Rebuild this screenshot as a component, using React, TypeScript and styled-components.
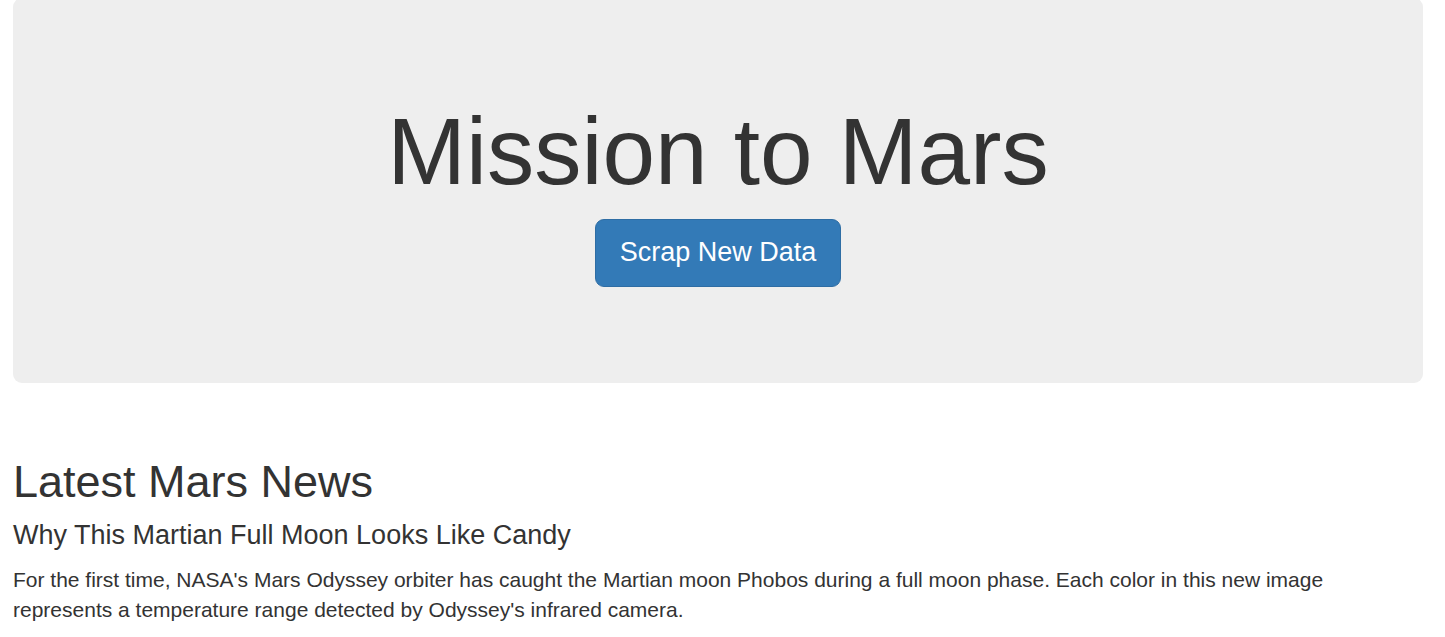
import React from "react";
import styled, { createGlobalStyle } from "styled-components";

const GlobalStyle = createGlobalStyle`
  html, body {
    margin: 0;
    padding: 0;
    background: #ffffff;
  }
  body {
    font-family: "Liberation Sans", Arial, Helvetica, sans-serif;
    font-size: 21px;
    line-height: 1.42857143;
    color: #333333;
  }
  * { box-sizing: border-box; }
`;

const Page = styled.div`
  padding: 0 22px 0 13px;
`;

const Jumbotron = styled.header`
  margin: -2px 0 45px;
  padding: 72px 90px;
  background: #eeeeee;
  border-radius: 9px;
  text-align: center;
`;

const Title = styled.h1`
  margin: 30px 0 15px;
  font-size: 94.5px;
  line-height: 1.1;
  font-weight: 500;
  color: inherit;
`;

const Lead = styled.p`
  margin: 0 0 24px;
  font-size: 31.5px;
  font-weight: 200;
  line-height: 45px;
`;

const PrimaryButton = styled.a`
  display: inline-block;
  padding: 15px 24px;
  font-size: 27px;
  line-height: 1.3333333;
  font-weight: 400;
  color: #ffffff;
  background: #337ab7;
  border: 1.5px solid #2e6da4;
  border-radius: 9px;
  text-decoration: none;
  vertical-align: middle;
  cursor: pointer;
  white-space: nowrap;
`;

const Section = styled.section`
  display: flow-root;
  padding-top: 29px;
`;

const SectionTitle = styled.h2`
  margin: 0 0 15px;
  font-size: 45px;
  line-height: 1.1;
  font-weight: 500;
`;

const NewsTitle = styled.h4`
  margin: 0 0 14px;
  font-size: 27px;
  line-height: 1.1;
  font-weight: 500;
`;

const NewsBody = styled.p`
  margin: 0 0 15px;
`;

export default function App() {
  return (
    <>
      <GlobalStyle />
      <Page>
        <Jumbotron>
          <Title>Mission to Mars</Title>
          <Lead>
            <PrimaryButton href="#" role="button">
              Scrap New Data
            </PrimaryButton>
          </Lead>
        </Jumbotron>
        <Section>
          <SectionTitle>Latest Mars News</SectionTitle>
          <NewsTitle>Why This Martian Full Moon Looks Like Candy</NewsTitle>
          <NewsBody>
            For the first time, NASA's Mars Odyssey orbiter has caught the
            Martian moon Phobos during a full moon phase. Each color in this new
            image represents a temperature range detected by Odyssey's infrared
            camera.
          </NewsBody>
        </Section>
      </Page>
    </>
  );
}
